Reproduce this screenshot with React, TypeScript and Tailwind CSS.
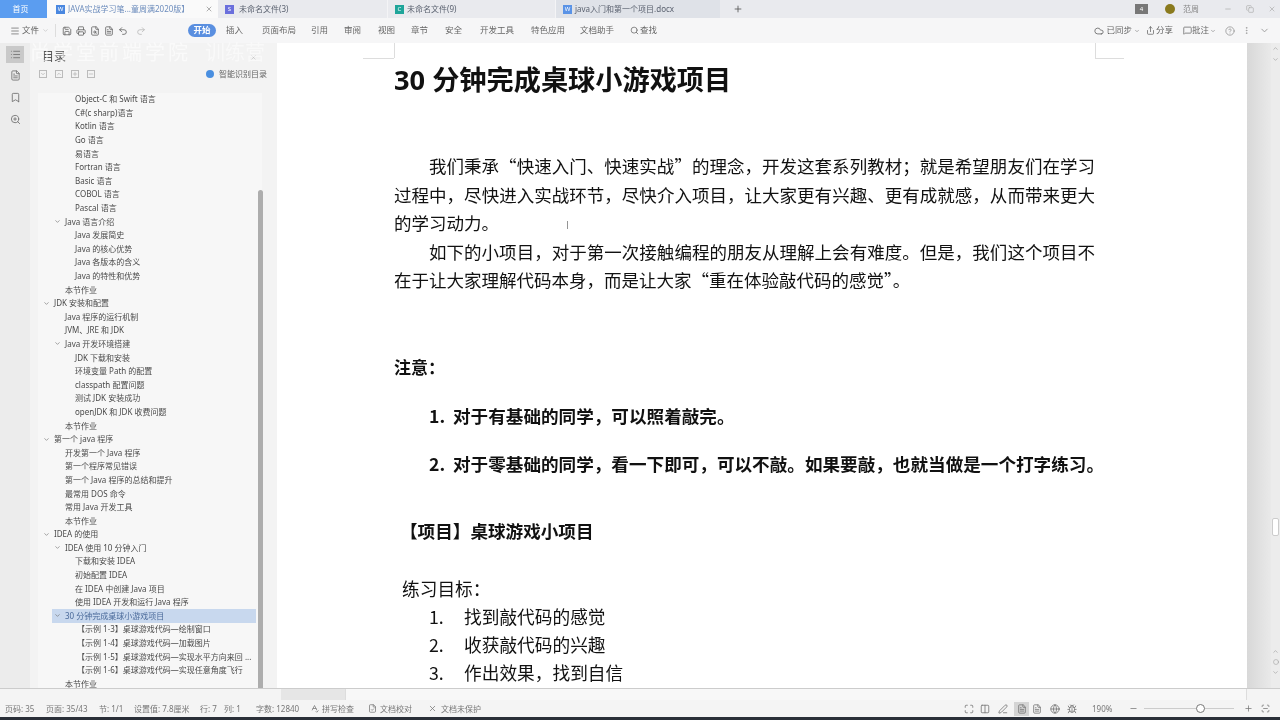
import { ChevronDown, ChevronUp, Menu, Save, Printer, FileSearch, Undo2, Redo2, Search, Cloud, Share, MessageSquare, HelpCircle, MoreVertical, X, Minus, Plus, Copy, List, FileText, Bookmark, ZoomIn, Maximize, Columns2, PenLine, FileCheck, Globe, Bug, ScanLine, SpellCheck, Circle } from 'lucide-react'

const sans = 'font-["Noto_Sans","Noto_Sans_CJK_SC",sans-serif]'

type Row = { level: 1 | 2 | 3 | 4; text: string; open?: boolean; selected?: boolean }

const rows: Row[] = [
  { level: 3, text: 'Object-C 和 Swift 语言' },
  { level: 3, text: 'C#(c sharp)语言' },
  { level: 3, text: 'Kotlin 语言' },
  { level: 3, text: 'Go 语言' },
  { level: 3, text: '易语言' },
  { level: 3, text: 'Fortran 语言' },
  { level: 3, text: 'Basic 语言' },
  { level: 3, text: 'COBOL 语言' },
  { level: 3, text: 'Pascal 语言' },
  { level: 2, text: 'Java 语言介绍', open: true },
  { level: 3, text: 'Java 发展简史' },
  { level: 3, text: 'Java 的核心优势' },
  { level: 3, text: 'Java 各版本的含义' },
  { level: 3, text: 'Java 的特性和优势' },
  { level: 2, text: '本节作业' },
  { level: 1, text: 'JDK 安装和配置', open: true },
  { level: 2, text: 'Java 程序的运行机制' },
  { level: 2, text: 'JVM、JRE 和 JDK' },
  { level: 2, text: 'Java 开发环境搭建', open: true },
  { level: 3, text: 'JDK 下载和安装' },
  { level: 3, text: '环境变量 Path 的配置' },
  { level: 3, text: 'classpath 配置问题' },
  { level: 3, text: '测试 JDK 安装成功' },
  { level: 3, text: 'openJDK 和 JDK 收费问题' },
  { level: 2, text: '本节作业' },
  { level: 1, text: ' 第一个 java 程序', open: true },
  { level: 2, text: '开发第一个 Java 程序' },
  { level: 2, text: '第一个程序常见错误' },
  { level: 2, text: '第一个 Java 程序的总结和提升' },
  { level: 2, text: '最常用 DOS 命令' },
  { level: 2, text: '常用 Java 开发工具' },
  { level: 2, text: '本节作业' },
  { level: 1, text: 'IDEA 的使用', open: true },
  { level: 2, text: 'IDEA 使用 10 分钟入门', open: true },
  { level: 3, text: '下载和安装 IDEA' },
  { level: 3, text: '初始配置 IDEA' },
  { level: 3, text: '在 IDEA 中创建 Java 项目' },
  { level: 3, text: '使用 IDEA 开发和运行 Java 程序' },
  { level: 2, text: '30 分钟完成桌球小游戏项目', open: true, selected: true },
  { level: 4, text: '【示例 1-3】桌球游戏代码—绘制窗口' },
  { level: 4, text: '【示例 1-4】桌球游戏代码—加载图片' },
  { level: 4, text: '【示例 1-5】桌球游戏代码—实现水平方向来回 ...' },
  { level: 4, text: '【示例 1-6】桌球游戏代码—实现任意角度飞行' },
  { level: 2, text: '本节作业' },
]

const indent = { 1: 'pl-[16px]', 2: 'pl-[27px]', 3: 'pl-[37px]', 4: 'pl-[39px]' }

const menu = [
  { label: '插入', cls: 'w-[36px]' },
  { label: '页面布局', cls: 'w-[49px]' },
  { label: '引用', cls: 'w-[33px]' },
  { label: '审阅', cls: 'w-[34px]' },
  { label: '视图', cls: 'w-[33px]' },
  { label: '章节', cls: 'w-[34px]' },
  { label: '安全', cls: 'w-[35px]' },
  { label: '开发工具', cls: 'w-[51px]' },
  { label: '特色应用', cls: 'w-[49px]' },
  { label: '文档助手', cls: 'w-[50px]' },
]

function TabBar() {
  return (
    <div className="flex h-[18px] shrink-0 items-center bg-[#e9eaee] text-[8px] text-[#5b6270]">
      <div className="flex h-full w-[47px] items-center justify-center bg-[#5b9df0] pr-[6px] text-white">首页</div>
      <div className="flex h-full w-[171px] items-center bg-[#fafafa] pl-[9px]">
        <span className="mr-[3px] flex h-[9px] w-[9px] items-center justify-center bg-[#4a88e0] text-[6px] text-white">W</span>
        <span className="w-[135px] truncate text-[#6d8dbd]">JAVA实战学习笔...童周满2020版】</span>
        <X size={8} className="ml-[2px] text-[#888]" />
      </div>
      <div className="flex h-full w-[170px] items-center border-r border-[#f4f4f6] pl-[7px]">
        <span className="mr-[5px] flex h-[9px] w-[9px] items-center justify-center bg-[#6a6fdc] text-[6px] text-white">S</span>
        未命名文件(3)
      </div>
      <div className="flex h-full w-[168px] items-center border-r border-[#f4f4f6] pl-[7px]">
        <span className="mr-[3px] flex h-[9px] w-[9px] items-center justify-center bg-[#1fa59a] text-[6px] text-white">C</span>
        未命名文件(9)
      </div>
      <div className="flex h-full w-[164px] items-center bg-[#dfe2e8] pl-[7px]">
        <span className="mr-[3px] flex h-[9px] w-[9px] items-center justify-center bg-[#5a93e6] text-[6px] text-white">W</span>
        java入门和第一个项目.docx
      </div>
      <Plus size={10} className="ml-[13px] text-[#555]" />
      <div className="ml-auto flex items-center">
        <span className="flex h-[10px] w-[13px] items-center justify-center bg-[#777] text-[6px] text-white">4</span>
        <span className="ml-[17px] h-[10px] w-[10px] rounded-full bg-[#8a7a1e]" />
        <span className="ml-[8px] w-[41px] text-[#888]">范周</span>
        <Minus size={8} className="text-[#aaa]" />
        <Copy size={8} className="ml-[14px] text-[#aaa]" />
        <X size={8} className="ml-[14px] mr-[4px] text-[#aaa]" />
      </div>
    </div>
  )
}

function ToolBar() {
  return (
    <div className="flex h-[25px] shrink-0 items-center bg-[#f6f6f7] pl-[10px] text-[8.5px] text-[#666]">
      <Menu size={10} className="text-[#777]" />
      <span className="ml-[2px]">文件</span>
      <ChevronDown size={7} className="ml-[3px] text-[#bbb]" />
      <span className="ml-[6px] h-[13px] w-px bg-[#ddd]" />
      <div className="ml-[6px] flex w-[126px] items-center gap-[4px] text-[#666]">
        <Save size={10} />
        <Printer size={10} />
        <FileSearch size={10} />
        <FileText size={10} />
        <Undo2 size={10} />
        <Redo2 size={10} className="ml-[4px] text-[#bbb]" />
      </div>
      <span className="flex h-[13px] w-[28px] items-center justify-center rounded-full bg-[#5a8fe0] font-bold text-white">开始</span>
      <div className="ml-[10px] flex items-center">
        {menu.map(m => (
          <span key={m.label} className={m.cls}>{m.label}</span>
        ))}
      </div>
      <Search size={9} />
      <span className="ml-[1px]">查找</span>
      <div className="ml-auto flex items-center">
        <Cloud size={10} />
        <span className="ml-[2px]">已同步</span>
        <ChevronDown size={6} className="ml-[2px]" />
        <Share size={9} className="ml-[6px]" />
        <span className="ml-[1px]">分享</span>
        <MessageSquare size={9} className="ml-[10px]" />
        <span>批注</span>
        <ChevronDown size={6} className="ml-[1px]" />
        <HelpCircle size={10} className="ml-[9px] text-[#999]" />
        <MoreVertical size={9} className="ml-[7px] text-[#999]" />
        <ChevronDown size={11} className="ml-[8px] mr-[10px] text-[#999]" />
      </div>
    </div>
  )
}

function Sidebar() {
  return (
    <div className="flex h-full w-[277px] shrink-0 bg-[#f3f3f3]">
      <div className="flex w-[30px] flex-col items-center bg-[#ececec] pt-[3px] text-[#777]">
        <div className="flex h-[17px] w-[18px] items-center justify-center bg-[#c9c9c9]"><List size={11} /></div>
        <FileText size={11} className="mt-[7px]" />
        <Bookmark size={11} className="mt-[11px]" />
        <ZoomIn size={11} className="mt-[11px]" />
      </div>
      <div className="flex w-[247px] flex-col pr-[15px]">
        <div className="h-[49.5px] shrink-0 pl-[12px] text-[#555]">
          <div className="flex h-[22px] items-end justify-between pr-[5px] text-[12px] leading-[16px]">
            目录
            <X size={7} className="mb-[4px] text-[#bbb]" />
          </div>
          <div className="mt-[4px] ml-[-3px] flex h-[10px] items-center text-[#999]">
            <span className="flex h-[8px] w-[8px] items-center justify-center border border-[#bbb]"><ChevronDown size={6} /></span>
            <span className="ml-[8px] flex h-[8px] w-[8px] items-center justify-center border border-[#bbb]"><ChevronUp size={6} /></span>
            <span className="ml-[8px] flex h-[8px] w-[8px] items-center justify-center border border-[#bbb]"><Plus size={6} /></span>
            <span className="ml-[8px] flex h-[8px] w-[8px] items-center justify-center border border-[#bbb]"><Minus size={6} /></span>
            <span className="ml-auto h-[8px] w-[8px] rounded-full bg-[#4a8fe0]" />
            <span className="ml-[5px] mr-[-5px] whitespace-nowrap text-[8px] text-[#666]">智能识别目录</span>
          </div>
        </div>
        <div className="relative ml-[8px] flex-1 bg-[#f7f7f7] text-[8px] text-[#4a4a4a]">
          {rows.map((r, i) => (
            <div key={i} className={`relative flex h-[13.6px] items-center whitespace-nowrap ${indent[r.level]}`}>
              {r.selected && <span className="absolute inset-y-0 right-[6px] left-[14px] bg-[#c8d8ee]" />}
              {r.open && <ChevronDown size={7} className={`absolute ${r.level === 1 ? 'left-[5px]' : 'left-[16px]'} text-[#666]`} />}
              <span className={`relative ${r.selected ? 'text-[#4a6a9a]' : ''}`}>{r.text}</span>
            </div>
          ))}
          <span className="absolute top-[97px] right-[-1px] bottom-0 w-[5px] rounded-full bg-[#adadad]" />
        </div>
      </div>
    </div>
  )
}

function Page() {
  return (
    <div className="relative h-full w-[970px] shrink-0 overflow-hidden bg-white pl-[117px] font-['Noto_Sans_CJK_SC',sans-serif] text-[#111]">
      <span className="absolute top-0 left-[117px] h-[15px] w-px bg-[#ddd]" />
      <span className="absolute top-[15px] left-[86px] h-px w-[31px] bg-[#ddd]" />
      <span className="absolute top-0 left-[818px] h-[15px] w-px bg-[#ddd]" />
      <span className="absolute top-[15px] left-[818px] h-px w-[29px] bg-[#ddd]" />

      <h1 className="mt-[17px] h-[40px] font-['Open_Sans','Noto_Sans_CJK_SC',sans-serif] text-[27.2px] leading-[40px] font-bold whitespace-nowrap">30 分钟完成桌球小游戏项目</h1>

      <div className="mt-[52px] w-[701px] text-[17.5px] leading-[28.5px]">
        <p className="pl-[35px] [text-align-last:justify] whitespace-nowrap">我们秉承“快速入门、快速实战”的理念，开发这套系列教材；就是希望朋友们在学习</p>
        <p className="[text-align-last:justify]">过程中，尽快进入实战环节，尽快介入项目，让大家更有兴趣、更有成就感，从而带来更大</p>
        <p>的学习动力。</p>
        <p className="pl-[35px] [text-align-last:justify] whitespace-nowrap">如下的小项目，对于第一次接触编程的朋友从理解上会有难度。但是，我们这个项目不</p>
        <p>在于让大家理解代码本身，而是让大家“重在体验敲代码的感觉”。</p>
      </div>

      <p className="mt-[58px] text-[17px] leading-[28px] font-bold">注意：</p>
      <p className="mt-[21px] ml-[35px] flex text-[17.6px] leading-[28px] font-bold whitespace-nowrap"><span className="w-[24px]">1.</span>对于有基础的同学，可以照着敲完。</p>
      <p className="mt-[20px] ml-[35px] flex text-[17.6px] leading-[28px] font-bold whitespace-nowrap"><span className="w-[24px]">2.</span>对于零基础的同学，看一下即可，可以不敲。如果要敲，也就当做是一个打字练习。</p>

      <p className="mt-[39px] ml-[6px] text-[17.6px] leading-[28px] font-bold whitespace-nowrap">【项目】桌球游戏小项目</p>
      <p className="mt-[29px] ml-[8px] text-[17.7px] leading-[28px]">练习目标：</p>
      <div className="text-[17.7px] leading-[28px]">
        <p className="ml-[35px] flex"><span className="w-[35px]">1.</span>找到敲代码的感觉</p>
        <p className="ml-[35px] flex"><span className="w-[35px]">2.</span>收获敲代码的兴趣</p>
        <p className="ml-[35px] flex"><span className="w-[35px]">3.</span>作出效果，找到自信</p>
      </div>

      <span className="absolute top-[177px] left-[289px] text-[10px] leading-none font-light text-[#555]">I</span>
    </div>
  )
}

function RightGutter() {
  return (
    <div className="relative flex h-full flex-1 bg-gradient-to-r from-[#d8d8d8] to-[#f0f0f0]">
      <div className="ml-auto flex h-full w-[9px] flex-col items-center bg-[#ececec] pt-[2px] text-[#999]">
        <ChevronUp size={7} />
        <ChevronDown size={7} className="mt-[4px]" />
        <span className="mt-[455px] h-[18px] w-[7px] rounded-[2px] border border-[#ccc] bg-white" />
        <ChevronUp size={7} className="mt-[112px]" />
        <Circle size={6} className="mt-[4px]" />
        <ChevronDown size={7} className="mt-[4px]" />
      </div>
    </div>
  )
}

function StatusBar() {
  return (
    <div className="flex h-[17px] shrink-0 items-center bg-[#f4f4f4] text-[8px] whitespace-nowrap text-[#777]">
      <span className="ml-[5px] w-[41px]">页码: 35</span>
      <span className="w-[53px]">页面: 35/43</span>
      <span className="w-[35px]">节: 1/1</span>
      <span className="w-[66px]">设置值: 7.8厘米</span>
      <span className="w-[24px]">行: 7</span>
      <span className="w-[32px]">列: 1</span>
      <span className="w-[54px]">字数: 12840</span>
      <SpellCheck size={9} />
      <span className="ml-[3px] w-[46px]">拼写检查</span>
      <FileCheck size={9} />
      <span className="ml-[3px] w-[48px]">文档校对</span>
      <X size={9} />
      <span className="ml-[4px]">文档未保护</span>
      <div className="ml-auto flex items-center text-[#777]">
        <Maximize size={10} />
        <Columns2 size={10} className="ml-[6px]" />
        <PenLine size={10} className="ml-[8px]" />
        <span className="ml-[6px] flex h-[14px] w-[15px] items-center justify-center bg-[#d4d4d4]"><FileText size={10} /></span>
        <FileText size={10} className="ml-[3px]" />
        <Globe size={10} className="ml-[8px]" />
        <Bug size={10} className="ml-[7px]" />
        <span className="ml-[15px] w-[32px]">190%</span>
        <Minus size={9} className="ml-[5px]" />
        <div className="relative ml-[6px] h-px w-[90px] bg-[#ccc]">
          <span className="absolute top-[-4px] left-[52px] h-[9px] w-[9px] rounded-full border border-[#777] bg-white" />
        </div>
        <Plus size={9} className="ml-[10px]" />
        <ScanLine size={9} className="ml-[8px] mr-[10px]" />
      </div>
    </div>
  )
}

export default function App() {
  return (
    <div className={`relative flex h-[720px] w-[1280px] flex-col overflow-hidden bg-white blur-[0.5px] ${sans}`}>
      <TabBar />
      <ToolBar />
      <div className="flex min-h-0 flex-1">
        <Sidebar />
        <Page />
        <RightGutter />
      </div>
      <div className="relative z-10 flex h-[12px] shrink-0 border-t border-[#ccc] bg-[#f4f4f4]">
        <span className="ml-[281px] h-full w-[64px] bg-[#e6e6e6]" />
        <span className="h-full w-[902px] border-x border-[#ddd] bg-[#f8f8f8]" />
      </div>
      <StatusBar />
      <div className="h-[3px] shrink-0 bg-[#2a2f38]" />
      <div className="absolute top-[43px] left-[30px] text-[20px] leading-[20px] tracking-[3px] whitespace-nowrap text-white/60">尚学堂前端学院</div>
      <div className="absolute top-[43px] left-[205px] text-[20px] leading-[20px] whitespace-nowrap text-white/50">训练营</div>
    </div>
  )
}
